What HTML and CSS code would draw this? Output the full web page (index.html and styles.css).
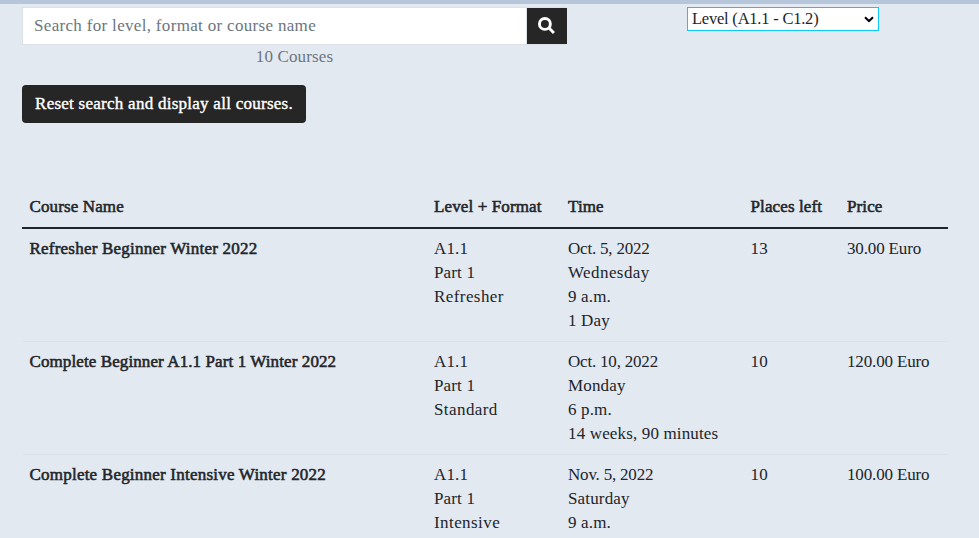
FILE: index.html
```html
<!DOCTYPE html>
<html lang="en">
<head>
<meta charset="utf-8">
<title>Courses</title>
<link rel="stylesheet" href="styles.css">
</head>
<body>
<main class="page">
  <section class="filters">
    <form class="search">
      <div class="search-group">
        <input class="search-input" type="text" placeholder="Search for level, format or course name" aria-label="Search">
        <button class="search-button" type="button" aria-label="Search">
          <svg class="search-icon" viewBox="0 0 512 512"><path fill="none" stroke="currentColor" stroke-width="88" d="M208 44a164 164 0 1 0 0 328a164 164 0 1 0 0-328M325 325L480 480"/></svg>
        </button>
      </div>
      <p class="count">10 Courses</p>
    </form>
    <div class="level-filter">
      <span>Level (A1.1 - C1.2)</span>
      <svg class="chevron" viewBox="0 0 10 7"><path d="M1 1.200 5 5 9 1.200" fill="none" stroke="#000" stroke-width="2"/></svg>
    </div>
  </section>
  <button class="reset" type="button">Reset search and display all courses.</button>
  <table class="courses">
    <colgroup><col class="c-name"><col class="c-level"><col class="c-time"><col class="c-places"><col class="c-price"></colgroup>
    <thead>
      <tr><th>Course Name</th><th>Level + Format</th><th>Time</th><th>Places left</th><th>Price</th></tr>
    </thead>
    <tbody>
      <tr>
        <th>Refresher Beginner Winter 2022</th>
        <td>A1.1<br>Part 1<br><span class="format">Refresher</span></td>
        <td><span class="date">Oct. 5, 2022</span><br><span class="format">Wednesday</span><br>9 a.m.<br>1 Day</td>
        <td>13</td><td class="price">30.00 Euro</td>
      </tr>
      <tr>
        <th class="coded">Complete Beginner A1.1 Part 1 Winter 2022</th>
        <td>A1.1<br>Part 1<br><span class="format">Standard</span></td>
        <td><span class="date">Oct. 10, 2022</span><br>Monday<br>6 p.m.<br>14 weeks, 90 minutes</td>
        <td>10</td><td class="price">120.00 Euro</td>
      </tr>
      <tr>
        <th>Complete Beginner Intensive Winter 2022</th>
        <td>A1.1<br>Part 1<br><span class="format">Intensive</span></td>
        <td><span class="date">Nov. 5, 2022</span><br>Saturday<br>9 a.m.</td>
        <td>10</td><td class="price">100.00 Euro</td>
      </tr>
    </tbody>
  </table>
</main>
</body>
</html>
```
FILE: styles.css
```css
* { box-sizing: border-box; }
html { height: 100%; overflow: hidden; }
body {
  margin: 0;
  height: 538px;
  overflow: hidden;
  border-top: 4px solid #b5c5da;
  background: #e3e9f1;
  color: #212529;
  font: 17px/24px "Source Serif Pro", "Liberation Serif", serif;
  letter-spacing: 0.15px;
}
.page { padding: 3px 31px 0 22px; }
.filters { display: flex; height: 78px; }
.search { width: 545px; margin-right: 120px; }
.search-group { display: flex; height: 38px; border: 1px solid #dce1e8; border-right: 0; }
.search-input {
  flex: 1;
  min-width: 0;
  padding: 0 11px;
  border: 0;
  border-right: 1px solid #dce1e8;
  background: #fff;
  font: inherit;
  letter-spacing: 0.32px;
}
.search-input::placeholder { color: #6c757d; opacity: 1; }
.search-button {
  display: grid;
  place-items: center;
  width: 40px;
  padding: 0;
  border: 0;
  background: #262626;
  color: #fff;
}
.search-icon { width: 17px; height: 17px; margin: -2px 1px 0 0; }
.count { margin: 0; color: #6c757d; text-align: center; }
.level-filter {
  display: flex;
  align-items: center;
  justify-content: space-between;
  width: 192px;
  height: 24px;
  padding: 0 4px;
  border: 1px solid #0dcaf0;
  background: #fff;
  font-size: 16.5px;
  letter-spacing: -0.22px;
}
.chevron { width: 10px; height: 7px; }
.reset {
  display: block;
  width: 284px;
  height: 38px;
  padding: 0;
  border: 0;
  border-radius: 4px;
  background: #262626;
  color: #fff;
  font: inherit;
  letter-spacing: 0.26px;
  -webkit-text-stroke: 0.4px #fff;
}
.courses {
  width: 926px;
  margin-top: 64px;
  border-collapse: separate;
  border-spacing: 0;
  table-layout: fixed;
}
.c-name { width: 404.500px; }
.c-level { width: 134px; }
.c-time { width: 182.500px; }
.c-places { width: 96.500px; }
.c-price { width: 108.500px; }
.courses th, .courses td {
  padding: 8px 0 8px 7.5px;
  border-bottom: 1px solid #dee2ea;
  text-align: left;
  vertical-align: top;
  white-space: nowrap;
}
.courses th { font-weight: 400; letter-spacing: 0.22px; -webkit-text-stroke: 0.55px #212529; }
.courses thead th { border-bottom: 2px solid #212529; letter-spacing: 0.12px; }
.courses .coded { letter-spacing: 0.1px; }
.date { letter-spacing: -0.2px; }
.format { letter-spacing: 0.42px; }
.price { letter-spacing: -0.15px; }
```
